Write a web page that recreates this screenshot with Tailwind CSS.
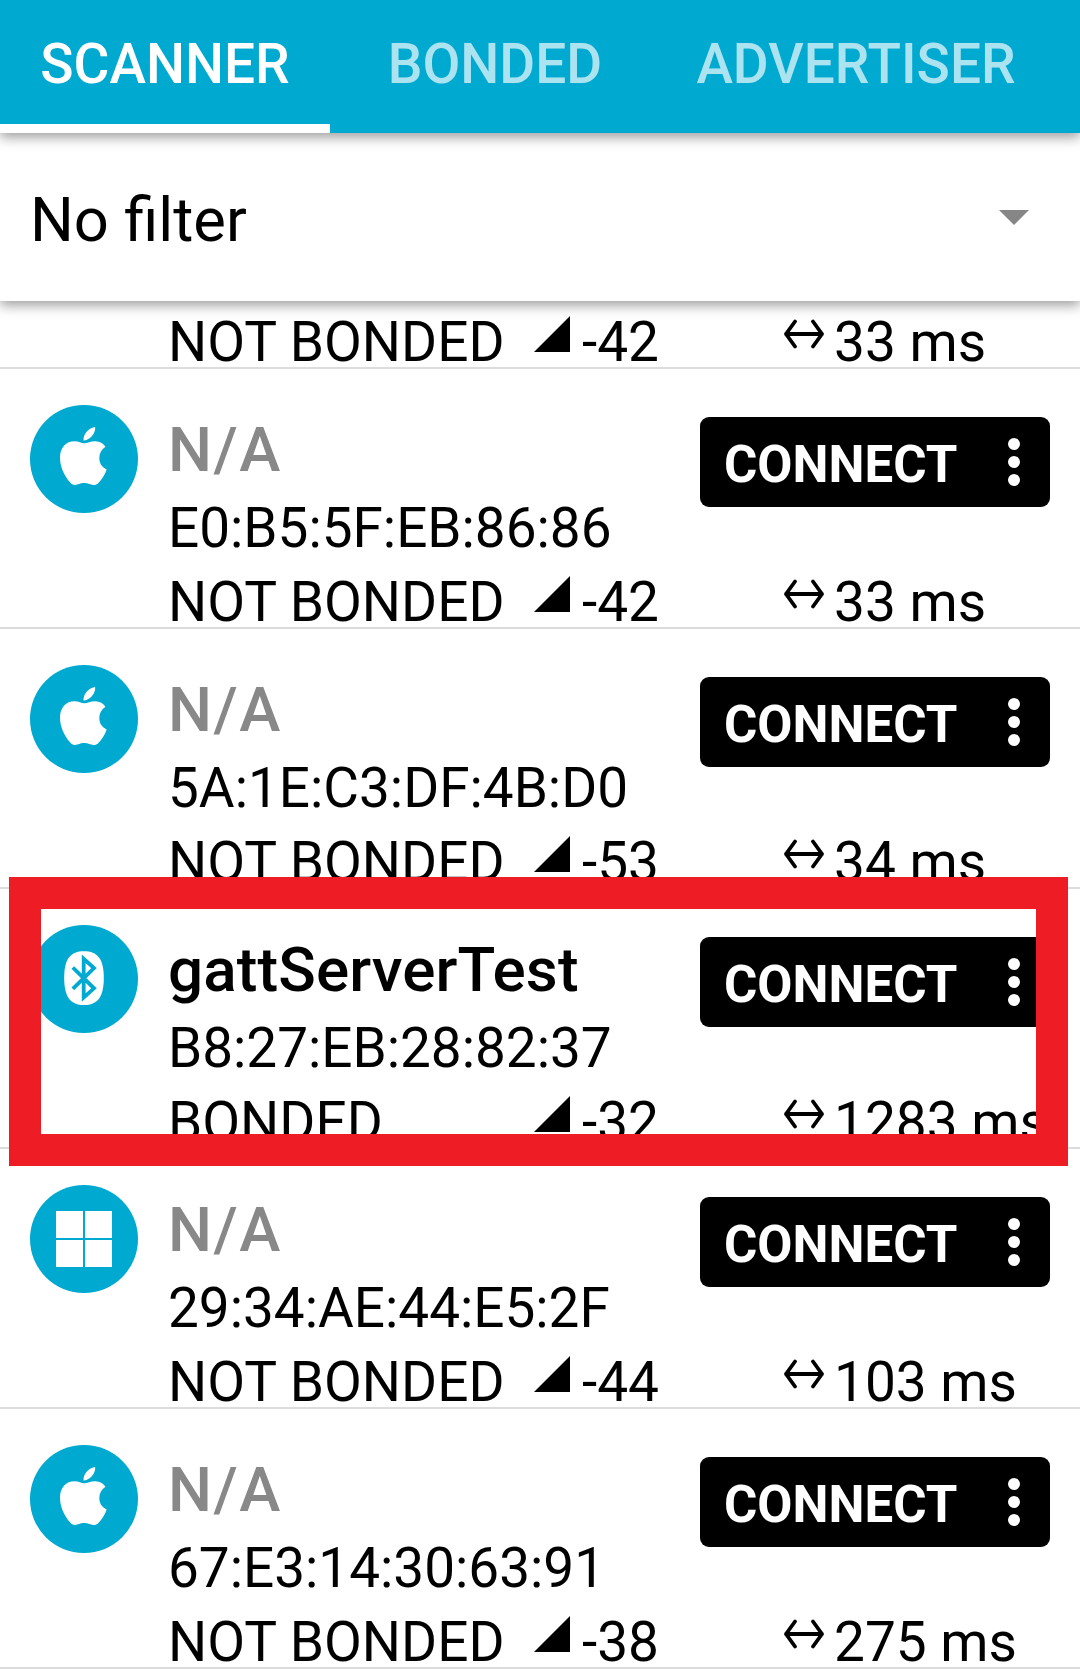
<!DOCTYPE html>
<html lang="en">
<head>
<meta charset="utf-8">
<title>Scanner</title>
<script src="https://cdn.jsdelivr.net/npm/@tailwindcss/browser@4"></script>
</head>
<body class="relative h-[1669px] w-[1080px] overflow-hidden bg-white font-[Roboto,sans-serif] text-black">
<svg class="hidden">
  <symbol id="apple" viewBox="0 0 108 108">
    <path fill="#fff" d="M53.5 35.5c-.3-3.600 1.500-7 3.800-9.400 2.200-2.300 5.200-3.800 7.900-4.100.3 3.300-1.200 6.700-3.400 9.200-2.300 2.600-5.300 4.300-8.300 4.300zM54.200 38.300c3 0 6.300-2.100 11.100-2.100 4.500 0 8 2.200 10.200 5.600-4.200 2.900-6.200 6.700-6.200 11.300 0 5.300 2.800 9.400 7.400 11.300-1.900 5.500-5 10.300-8.300 13.500-1.400 1.500-2.800 2-4.800 2-3.400 0-5.100-1.900-9.300-1.900-4.500 0-5.800 1.900-9.300 1.900-2.100 0-3.600-.9-5-2.600-6-6.800-10-16-10-24.600 0-10.400 6.200-16.500 14.500-16.500 4.200 0 7 2.100 9.700 2.100z"/>
  </symbol>
  <symbol id="windows" viewBox="0 0 108 108">
    <path fill="#fff" d="M26 26h27v27H26zM55 26h27v27H55zM26 55h27v27H26zM55 55h27v27H55z"/>
  </symbol>
  <symbol id="bluetooth" viewBox="0 0 108 108">
    <path fill="#fff" d="M54 26.300c13.500 0 19.800 7.500 19.800 26.700S67.500 80 54 80 34.200 72.200 34.200 53 40.500 26.300 54 26.300z"/>
    <path fill="none" stroke="#00a9d0" stroke-width="3.800" d="M42.800 42.500L64 63.300 53.700 72.500V33.800L64 43.100 42.800 63.900"/>
  </symbol>
  <symbol id="signal" viewBox="0 0 36 36"><path d="M0 36L36 0V36z"/></symbol>
  <symbol id="interval" viewBox="0 0 40 30">
    <path fill="none" stroke="#000" stroke-width="3.800" stroke-linecap="round" stroke-linejoin="round" d="M2 15H38M11 2.500L2 15l9 12.500M29 2.500L38 15l-9 12.500"/>
  </symbol>
</svg>

<header class="relative z-20 h-[133px] bg-[#00a9d0] shadow-[0_4px_12px_rgba(0,0,0,0.4)]">
  <nav class="flex h-full text-[55px] leading-[129px] font-medium">
    <div class="h-full w-[330px] border-b-[9px] border-white text-center whitespace-nowrap text-white">SCANNER</div>
    <div class="w-[330px] text-center whitespace-nowrap text-white/67">BONDED</div>
    <div class="w-[392px] text-center whitespace-nowrap text-white/67">ADVERTISER</div>
  </nav>
</header>

<section class="relative z-10 flex h-[168px] items-center justify-between bg-white pr-[51px] pl-[30px] shadow-[0_4px_12px_rgba(0,0,0,0.4)]">
  <span class="pt-[5px] text-[61.500px] leading-[74px]">No filter</span>
  <svg class="h-[15px] w-[30px]" viewBox="0 0 30 15"><path fill="#868686" d="M0 0h30L15 15z"/></svg>
</section>

<main id="list"></main>

<div class="absolute top-[877px] left-[9px] z-30 h-[289px] w-[1059px] border-32 border-[#ee1c25]"></div>

<script>
  const devices = [
    { bond: 'NOT BONDED', rssi: '-42', interval: '33 ms' },
    { icon: 'apple', name: 'N/A', mac: 'E0:B5:5F:EB:86:86', bond: 'NOT BONDED', rssi: '-42', interval: '33 ms' },
    { icon: 'apple', name: 'N/A', mac: '5A:1E:C3:DF:4B:D0', bond: 'NOT BONDED', rssi: '-53', interval: '34 ms' },
    { icon: 'bluetooth', name: 'gattServerTest', mac: 'B8:27:EB:28:82:37', bond: 'BONDED', rssi: '-32', interval: '1283 ms' },
    { icon: 'windows', name: 'N/A', mac: '29:34:AE:44:E5:2F', bond: 'NOT BONDED', rssi: '-44', interval: '103 ms' },
    { icon: 'apple', name: 'N/A', mac: '67:E3:14:30:63:91', bond: 'NOT BONDED', rssi: '-38', interval: '275 ms' },
  ];
  const status = d => `
    <div class="flex h-12 pl-[168px] text-[55px] leading-[46px] whitespace-nowrap">
      <span class="w-[366px]">${d.bond}</span>
      <svg class="-mt-[3px] h-9 w-9"><use href="#signal"/></svg>
      <span class="w-[202px] pl-3">${d.rssi}</span>
      <svg class="ml-[12px] h-[30px] w-10"><use href="#interval"/></svg>
      <span class="pl-[10px]">${d.interval}</span>
    </div>`;
  document.getElementById('list').innerHTML = devices.map(d => d.name ? `
    <article class="h-[260px] border-b-2 border-[#dcdcdc]">
      <div class="flex h-[210px] pl-[30px]">
        <div class="mt-9 size-[108px] shrink-0 rounded-full bg-[#00a9d0]"><svg class="size-[108px]"><use href="#${d.icon}"/></svg></div>
        <div class="w-[562px] pt-11 pl-[30px] whitespace-nowrap">
          <div class="text-[62px] leading-[74px] font-medium ${d.name === 'N/A' ? 'tracking-[1.500px] text-[#888888]' : 'tracking-[0.100px] text-black'}">${d.name}</div>
          <div class="mt-[5px] text-[54.900px] leading-[72px]">${d.mac}</div>
        </div>
        <div class="mt-12 flex h-[90px] w-[350px] items-center justify-between rounded-[9px] bg-black pr-[30px] pl-6 text-white">
          <span class="pt-[5px] text-[51px] leading-[80px] font-bold">CONNECT</span>
          <span class="flex flex-col gap-1.5"><i class="size-3 rounded-full bg-white"></i><i class="size-3 rounded-full bg-white"></i><i class="size-3 rounded-full bg-white"></i></span>
        </div>
      </div>
      ${status(d)}
    </article>` : `
    <article class="h-[68px] border-b-2 border-[#dcdcdc] pt-[18px]">${status(d)}</article>`).join('');
</script>
</body>
</html>
